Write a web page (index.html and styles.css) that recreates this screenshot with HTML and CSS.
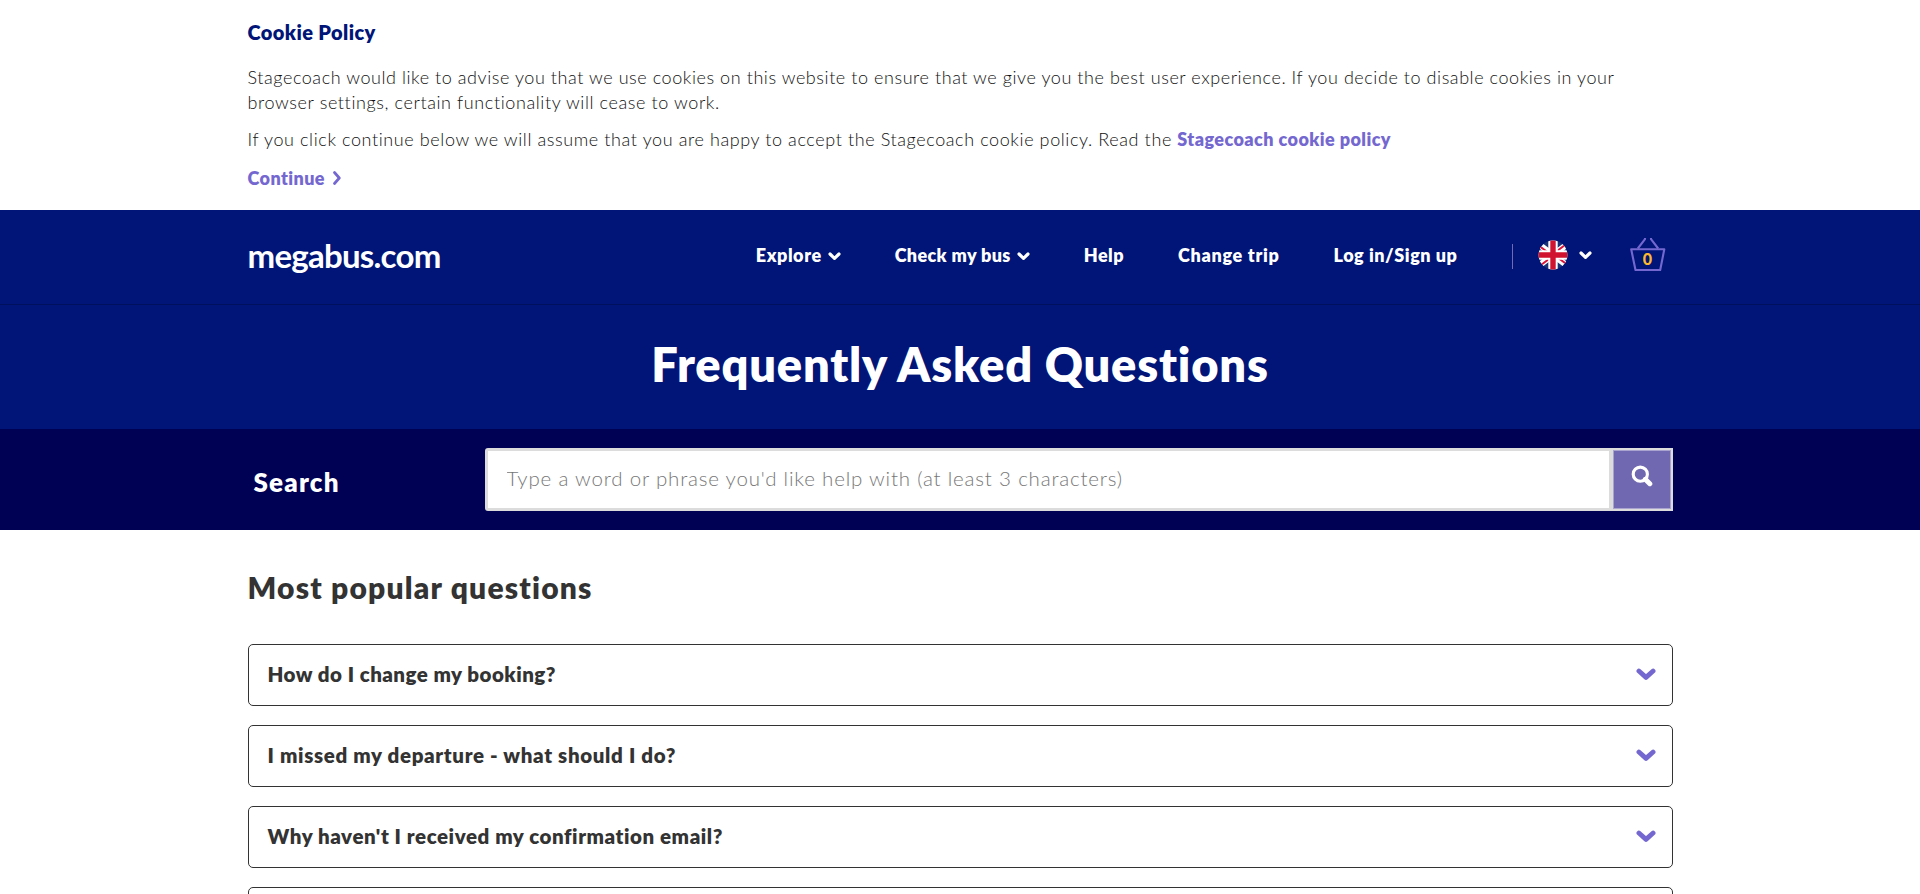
FILE: index.html
```
<!DOCTYPE html>
<html lang="en">
<head>
<meta charset="utf-8">
<title>Frequently Asked Questions | megabus.com</title>
<link rel="stylesheet" href="styles.css">
</head>
<body>
<section class="cookie">
  <div class="container">
    <h2 class="cookie-title">Cookie Policy</h2>
    <p class="cookie-text">Stagecoach would like to advise you that we use cookies on this website to ensure that we give you the best user experience. If you decide to disable cookies in your<br><span class="cookie-line2">browser settings, certain functionality will cease to work.</span></p>
    <p class="cookie-text cookie-text-second">If you click continue below we will assume that you are happy to accept the Stagecoach cookie policy. Read the <a class="link" href="#">Stagecoach cookie policy</a></p>
    <a class="link cookie-continue" href="#">Continue<svg class="icon-next" width="8" height="14" viewBox="0 0 8 14"><path d="M1.5 1.5 6.3 7 1.5 12.5"/></svg></a>
  </div>
</section>

<header class="header">
  <div class="container header-row">
    <a class="logo" href="#">megabus.com</a>
    <nav class="nav">
      <a class="nav-link nav-explore" href="#">Explore<svg class="icon-down" width="13" height="9" viewBox="0 0 13 9"><path d="M2 2 6.5 6.3 11 2"/></svg></a>
      <a class="nav-link nav-check" href="#">Check my bus<svg class="icon-down" width="13" height="9" viewBox="0 0 13 9"><path d="M2 2 6.5 6.3 11 2"/></svg></a>
      <a class="nav-link nav-help" href="#">Help</a>
      <a class="nav-link nav-change" href="#">Change trip</a>
      <a class="nav-link nav-login" href="#">Log in/Sign up</a>
    </nav>
    <div class="tools">
      <span class="divider"></span>
      <a class="locale" href="#">
        <svg class="flag" width="30" height="30" viewBox="0 0 30 30">
          <defs><clipPath id="round"><circle cx="15" cy="15" r="14.4"/></clipPath></defs>
          <g clip-path="url(#round)">
            <rect width="30" height="30" fill="#1b3277"/>
            <path d="M-1 3 31 27M31 3-1 27" stroke="#fff" stroke-width="6"/>
            <path d="M-1 4.2 15 16.2M31 2 15 14M31 26 15 14M-1 28 15 16" stroke="#d8143a" stroke-width="2"/>
            <path d="M15 0V30M0 15H30" stroke="#fff" stroke-width="9.4"/>
            <path d="M15 0V30M0 15H30" stroke="#d0142f" stroke-width="5.4"/>
          </g>
        </svg>
        <svg class="icon-down" width="13" height="9" viewBox="0 0 13 9"><path d="M2 2 6.5 6.3 11 2"/></svg>
      </a>
      <a class="basket" href="#">
        <svg class="basket-icon" width="36" height="34" viewBox="0 0 36 34"><path d="M1.2 11.3H34.3L30.2 32H5.5Z"/><path d="M7.8 10.5 15 1.2V0M28.2 10.5 21 1.2V0"/></svg>
        <span class="basket-count">0</span>
      </a>
    </div>
  </div>
</header>

<section class="hero"><h1 class="hero-title">Frequently Asked Questions</h1></section>

<section class="search">
  <form class="container search-row">
    <label class="search-label" for="q">Search</label>
    <div class="search-box">
      <input class="search-input" id="q" type="text" placeholder="Type a word or phrase you'd like help with (at least 3 characters)">
      <button class="search-button" type="button" aria-label="Search"><svg class="icon-search" width="22" height="22" viewBox="0 0 22 22"><circle cx="9.3" cy="9.2" r="7.1"/><path d="M14.3 14.3 18.8 18.7"/></svg></button>
    </div>
  </form>
</section>

<main class="container faq">
  <h2 class="faq-title">Most popular questions</h2>
  <div class="faq-list">
    <a class="faq-item q-change" href="#">How do I change my booking?<svg class="icon-open" width="20" height="13" viewBox="0 0 20 13"><path d="M2.9 3 10 9.4 17.1 3"/></svg></a>
    <a class="faq-item q-missed" href="#">I missed my departure - what should I do?<svg class="icon-open" width="20" height="13" viewBox="0 0 20 13"><path d="M2.9 3 10 9.4 17.1 3"/></svg></a>
    <a class="faq-item q-email" href="#">Why haven't I received my confirmation email?<svg class="icon-open" width="20" height="13" viewBox="0 0 20 13"><path d="M2.9 3 10 9.4 17.1 3"/></svg></a>
    <a class="faq-item" href="#"></a>
  </div>
</main>
</body>
</html>
```
FILE: styles.css
```
* { box-sizing: border-box; }
html { overflow: hidden; }
body {
  margin: 0;
  height: 894px;
  overflow: hidden;
  background: #fff;
  color: #333;
  font-family: Lato, "Open Sans", sans-serif;
}
h1, h2, p { margin: 0; }
a { color: inherit; text-decoration: none; }
svg { display: block; flex: none; fill: none; }
.container { width: 1425px; margin: 0 auto; }

.cookie { height: 210px; padding-top: 20px; }
.cookie-title {
  color: #001577;
  font-size: 20px;
  line-height: 24px;
  font-weight: 800;
  letter-spacing: 0.4px;
}
.cookie-text {
  margin-top: 21px;
  color: #111;
  font-size: 18px;
  line-height: 25px;
  font-weight: 300;
  letter-spacing: 0.565px;
  white-space: nowrap;
}
.cookie-line2 { letter-spacing: 0.6px; }
.cookie-text-second { margin-top: 12px; letter-spacing: 0.6px; }
.link { color: #7468d0; font-weight: 800; letter-spacing: 0.42px; }
.cookie-continue {
  display: flex;
  align-items: center;
  gap: 8px;
  width: max-content;
  margin-top: 14px;
  font-size: 18px;
  line-height: 25px;
}
.icon-next { stroke: #7468d0; stroke-width: 2.7; stroke-linecap: round; stroke-linejoin: round; margin-bottom: 2px; }

.header { height: 95px; background: #001577; border-bottom: 1px solid #00105c; color: #fff; }
.header-row { display: flex; align-items: center; height: 91px; }
.logo { font-size: 33px; line-height: 40px; font-weight: 700; letter-spacing: -0.75px; padding-bottom: 2px; }
.nav { display: flex; gap: 54px; margin-left: auto; font-size: 18px; line-height: 25px; font-weight: 800; }
.nav-link { display: flex; align-items: center; white-space: nowrap; }
.nav .icon-down { margin-left: 6px; margin-top: 1px; }
.icon-down { stroke: #fff; stroke-width: 3.2; stroke-linecap: round; stroke-linejoin: round; }
.nav-explore { letter-spacing: 0.55px; }
.nav-check { letter-spacing: 0.36px; }
.nav-help { letter-spacing: 0.45px; }
.nav-change { letter-spacing: 0.69px; }
.nav-login { letter-spacing: 0.54px; }
.tools { display: flex; align-items: center; margin-left: 54px; padding-right: 7px; }
.divider { width: 1px; height: 25px; background: #7468b8; margin-top: 2px; }
.locale { display: flex; align-items: center; gap: 11px; margin-left: 25px; }
.flag { margin-bottom: 2px; }
.basket { position: relative; margin-left: 38px; color: #fdb92e; }
.basket-icon { stroke: #7468d0; stroke-width: 2.1; stroke-linejoin: round; margin-bottom: 1px; }
.basket-count {
  position: absolute;
  inset: 12px 0 auto;
  font-size: 16px;
  line-height: 18px;
  font-weight: 900;
  text-align: center;
}

.hero { height: 124px; padding-top: 32px; background: #001577; color: #fff; text-align: center; }
.hero-title { font-size: 47px; line-height: 54px; font-weight: 800; letter-spacing: 0.81px; }

.search { height: 101px; padding-top: 19px; background: #000055; }
.search-row { display: flex; align-items: center; }
.search-label {
  width: 237px;
  padding: 5px 0 0 6px;
  color: #fff;
  font-size: 26px;
  line-height: 30px;
  font-weight: 800;
  letter-spacing: 1.2px;
}
.search-box {
  display: flex;
  flex: 1;
  gap: 4px;
  height: 63px;
  padding: 3px 2px 3px 3px;
  background: #dcdcdc;
  border-radius: 3px 0 0 3px;
}
.search-input {
  flex: 1;
  border: 0;
  padding: 0 0 4px 19px;
  background: #fff;
  font: 300 20.5px/24px Lato, "Open Sans", sans-serif;
  letter-spacing: 0.81px;
}
.search-input::placeholder { color: #777; opacity: 1; }
.search-button {
  width: 58px;
  margin-bottom: -1px;
  margin-top: -1px;
  padding: 0 0 7px;
  display: flex;
  align-items: center;
  justify-content: center;
  background: #7068b0;
  border: 1px solid #a9a3d0;
}
.icon-search { stroke: #fff; stroke-width: 3.1; stroke-linecap: round; }
.icon-search path { stroke-width: 5; }

.faq { padding-top: 40px; }
.faq-title { font-size: 30px; line-height: 35px; font-weight: 800; letter-spacing: 1.19px; }
.faq-list { display: grid; grid-auto-rows: 62px; gap: 19px; margin-top: 39px; }
.faq-item {
  display: flex;
  align-items: center;
  justify-content: space-between;
  padding: 0 16px 3px 19px;
  border: 1px solid #333;
  border-radius: 5px;
  font-size: 20.5px;
  line-height: 24px;
  font-weight: 800;
}
.q-change { letter-spacing: 0.47px; }
.q-missed { letter-spacing: 0.65px; }
.q-email { letter-spacing: 0.56px; }
.icon-open { stroke: #7468d0; stroke-width: 4.8; stroke-linecap: round; stroke-linejoin: round; margin-top: 2px; }
```
